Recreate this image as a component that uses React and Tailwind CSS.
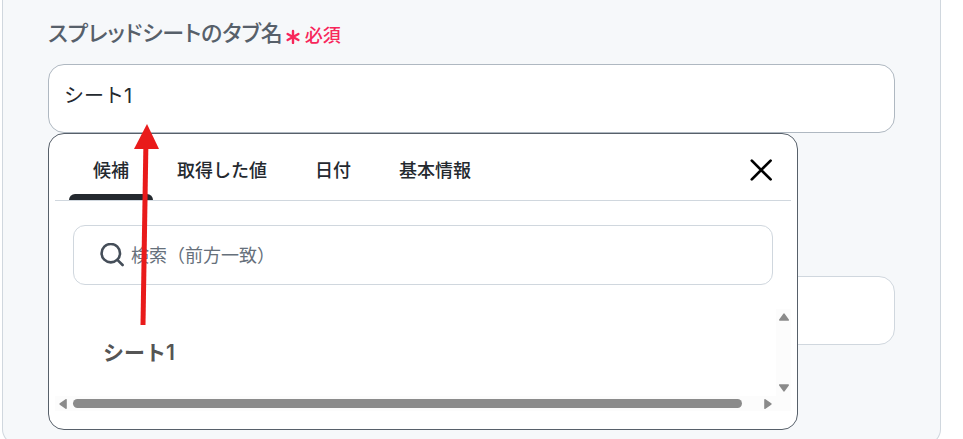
import React from "react";

const tabs = ["候補", "取得した値", "日付", "基本情報"];

function Asterisk() {
  return (
    <svg className="h-4 w-4" viewBox="0 0 16 16" fill="none" stroke="currentColor" strokeWidth="2.4" strokeLinecap="round" aria-hidden="true">
      <path d="M8 3v12M2.6 6l10.8 6M13.4 6L2.6 12" />
    </svg>
  );
}

function SearchIcon() {
  return (
    <svg className="h-6 w-6 shrink-0 text-[#454e59]" viewBox="0 0 24 24" fill="none" stroke="currentColor" strokeWidth="2.6" strokeLinecap="round" aria-hidden="true">
      <circle cx="10.8" cy="10.2" r="9.2" />
      <path d="M17.4 16.8l5.2 5.2" />
    </svg>
  );
}

function CloseIcon() {
  return (
    <svg className="h-6 w-6" viewBox="0 0 24 24" fill="none" stroke="currentColor" strokeWidth="2.7" strokeLinecap="round" aria-hidden="true">
      <path d="M2.8 2.6l18.8 18.8M21.6 2.6L2.8 21.4" />
    </svg>
  );
}

function ScrollArrow({ className }) {
  return (
    <svg className={className} viewBox="0 0 10 8" fill="#8b8b8b" stroke="#8b8b8b" strokeWidth="1.6" strokeLinejoin="round" aria-hidden="true">
      <path d="M5 1.2L9.2 7H.8z" />
    </svg>
  );
}

function Suggestions() {
  return (
    <div className="absolute top-full left-0 w-[750px] max-w-full rounded-2xl border border-[#57606a] bg-white px-1.5 pb-[18px]">
      <div className="flex h-[67px] items-stretch justify-between border-b border-[#d0d7de] pr-[18px] pl-3.5">
        <div role="tablist" className="flex">
          {tabs.map((tab, i) => (
            <button
              key={tab}
              type="button"
              role="tab"
              aria-selected={i === 0}
              className="flex flex-col items-center text-lg leading-7 font-medium text-[#24292f]"
            >
              <span className="flex flex-1 items-center px-6 pt-3.5">{tab}</span>
              <span className={i === 0 ? "h-1.5 w-full rounded-t-md bg-[#24292f]" : "h-1.5 w-full"} />
            </button>
          ))}
        </div>
        <button type="button" aria-label="閉じる" className="flex items-center pt-1.5 text-black">
          <CloseIcon />
        </button>
      </div>

      <div className="mt-6 mr-[18px] ml-[18px] flex h-[60px] items-center gap-[7px] rounded-xl border border-[#d0d7de] px-[26px]">
        <SearchIcon />
        <input
          type="text"
          aria-label="検索"
          placeholder="検索（前方一致）"
          className="min-w-0 flex-1 bg-transparent pt-0.5 text-lg text-[#24292f] outline-none placeholder:text-[#66707b]"
        />
      </div>

      <div className="mt-6">
        <div className="flex h-[87px]">
          <ul role="listbox" aria-label="候補" className="flex-1">
            <li role="option" aria-selected="false" className="flex h-[87px] items-center pl-12 text-[21px] font-semibold text-[#555555]">
              シート1
            </li>
          </ul>
          <div className="flex w-[15px] flex-col items-center justify-between bg-[#fcfcfc] py-1">
            <ScrollArrow className="h-2 w-2.5" />
            <ScrollArrow className="h-2 w-2.5 rotate-180" />
          </div>
        </div>
        <div className="flex h-[15px] items-center bg-[#fcfcfc] pr-[18px] pl-[3px]">
          <ScrollArrow className="h-2 w-2.5 -rotate-90" />
          <div className="mr-[21px] ml-[5px] h-[9px] flex-1 rounded-full bg-[#8b8b8b]" />
          <ScrollArrow className="h-2 w-2.5 rotate-90" />
        </div>
      </div>
    </div>
  );
}

function PointerArrow() {
  return (
    <svg className="pointer-events-none absolute top-[60px] left-[84px] h-[202px] w-[28px]" viewBox="0 0 28 202" aria-hidden="true">
      <path d="M14 14L11 201" stroke="#e91b1b" strokeWidth="5" fill="none" />
      <path d="M15 0L27 25L2 25Z" fill="#e91b1b" />
    </svg>
  );
}

export default function App() {
  return (
    <main className="h-screen overflow-hidden bg-white pr-[22px] pl-0.5 font-['Inter','Noto_Sans_CJK_JP',sans-serif]">
      <section className="h-[445px] rounded-b-2xl border-x border-b border-[#d0d7de] bg-[#f6f8fa] px-[45px] pt-4">
        <div className="flex h-12 items-start gap-0.5">
          <label htmlFor="sheet-tab" className="text-[22px] leading-[34px] font-medium text-[#57606a] [font-feature-settings:'palt']">
            スプレッドシートのタブ名
          </label>
          <span className="flex items-center gap-1 pt-1 text-lg leading-8 font-medium text-[#f7275a]">
            <Asterisk />
            必須
          </span>
        </div>
        <div className="relative">
          <input
            id="sheet-tab"
            type="text"
            defaultValue="シート1"
            className="block h-[69px] w-full rounded-2xl border border-[#afb8c1] bg-white px-[15px] pb-2 text-xl text-[#24292f] outline-none"
          />
          <Suggestions />
          <PointerArrow />
        </div>
        <input
          type="text"
          aria-label="値"
          className="mt-[143px] block h-[69px] w-full rounded-2xl border border-[#d0d7de] bg-white px-[15px] text-xl outline-none"
        />
      </section>
    </main>
  );
}
